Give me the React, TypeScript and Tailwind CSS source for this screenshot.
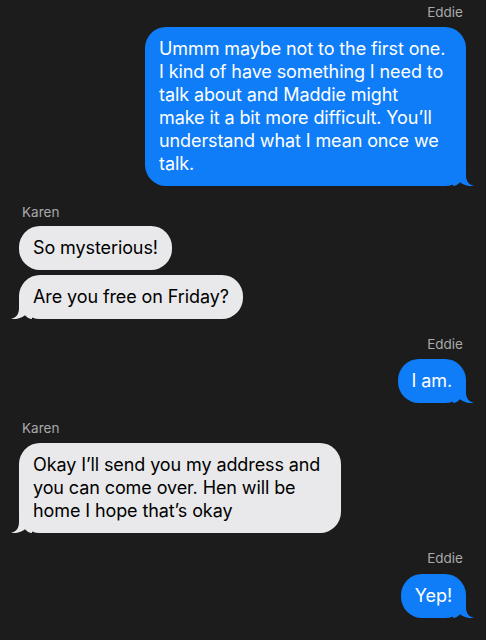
import React from "react";

const BLUE = "#0f7df8";
const GRAY = "#e9e9eb";

function Tail({ side, color }: { side: "left" | "right"; color: string }) {
  const cls =
    side === "right"
      ? "absolute bottom-0 right-[-9px] w-[22px] h-[20px]"
      : "absolute bottom-0 left-[-9px] w-[22px] h-[20px] -scale-x-100";
  return (
    <svg className={cls} viewBox="0 0 22 20">
      <path
        d="M0 0 H13 V9 C13 15 15.5 18.5 21 20 C16.5 20.6 11.5 19.6 7 16.2 C5 18.3 2.5 20 0 20 Z"
        fill={color}
      />
    </svg>
  );
}

function Label({ name, side }: { name: string; side: "left" | "right" }) {
  return (
    <div
      className={`text-[13.5px] leading-[16px] text-[#a9a9ab] ${
        side === "right" ? "text-right pr-[3px]" : "pl-[3px]"
      }`}
    >
      {name}
    </div>
  );
}

function Bubble({
  lines,
  side,
  tail,
  width,
}: {
  lines: string[];
  side: "left" | "right";
  tail?: boolean;
  width?: string;
}) {
  const isRight = side === "right";
  return (
    <div className={`flex ${isRight ? "justify-end" : "justify-start"}`}>
      <div
        className={`relative rounded-[21px] px-[14px] pt-[10px] pb-[11px] text-[18px] leading-[23px] tracking-[-0.1px] ${
          width ?? "max-w-[322px]"
        } ${isRight ? "bg-[#0f7df8] text-white" : "bg-[#e9e9eb] text-black"}`}
      >
        <span className="relative z-10">
          {lines.map((l, i) => (
            <React.Fragment key={i}>
              {i > 0 && <br />}
              {l}
            </React.Fragment>
          ))}
        </span>
        {tail && <Tail side={side} color={isRight ? BLUE : GRAY} />}
      </div>
    </div>
  );
}

export default function App() {
  return (
    <div
      className="w-[486px] h-[640px] overflow-hidden bg-[#1c1c1c] pl-[19px] pr-[20px] pt-[4px]"
      style={{ fontFamily: "Inter, 'Noto Sans', sans-serif" }}
    >
      <div className="flex flex-col">
        <Label name="Eddie" side="right" />
        <div className="mt-[7px]">
          <Bubble
            side="right"
            tail
            width="w-[321px]"
            lines={[
              "Ummm maybe not to the first one.",
              "I kind of have something I need to",
              "talk about and Maddie might",
              "make it a bit more difficult. You’ll",
              "understand what I mean once we",
              "talk.",
            ]}
          />
        </div>

        <div className="mt-[18px]">
          <Label name="Karen" side="left" />
        </div>
        <div className="mt-[6px] flex flex-col gap-[5px]">
          <Bubble side="left" lines={["So mysterious!"]} />
          <Bubble side="left" tail lines={["Are you free on Friday?"]} />
        </div>

        <div className="mt-[17px]">
          <Label name="Eddie" side="right" />
        </div>
        <div className="mt-[7px]">
          <Bubble side="right" tail lines={["I am."]} />
        </div>

        <div className="mt-[17px]">
          <Label name="Karen" side="left" />
        </div>
        <div className="mt-[7px]">
          <Bubble
            side="left"
            tail
            width="w-[322px]"
            lines={[
              "Okay I’ll send you my address and",
              "you can come over. Hen will be",
              "home I hope that’s okay",
            ]}
          />
        </div>

        <div className="mt-[17px]">
          <Label name="Eddie" side="right" />
        </div>
        <div className="mt-[8px]">
          <Bubble side="right" tail lines={["Yep!"]} />
        </div>
      </div>
    </div>
  );
}
